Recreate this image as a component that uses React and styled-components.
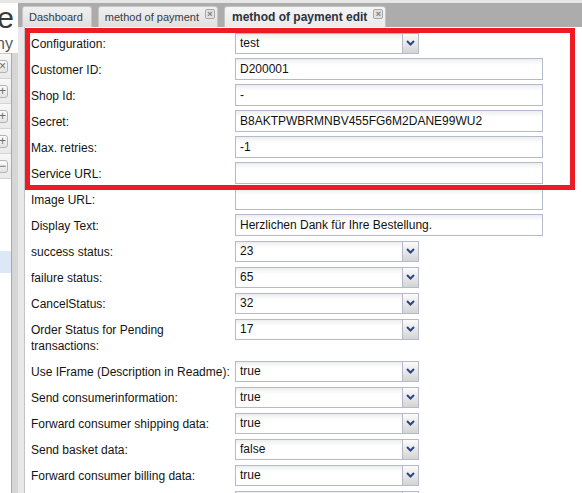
import React from "react";
import styled, { createGlobalStyle } from "styled-components";

const GlobalStyle = createGlobalStyle`
  html, body {
    margin: 0;
    padding: 0;
    background: #ffffff;
    overflow: hidden;
  }
  body {
    font-family: "Liberation Sans", Arial, sans-serif;
    font-size: 12px;
    color: #1c1c1c;
  }
`;

const rows = [
  { label: "Configuration:", kind: "select", value: "test" },
  { label: "Customer ID:", kind: "text", value: "D200001" },
  { label: "Shop Id:", kind: "text", value: "-" },
  { label: "Secret:", kind: "text", value: "B8AKTPWBRMNBV455FG6M2DANE99WU2" },
  { label: "Max. retries:", kind: "text", value: "-1" },
  { label: "Service URL:", kind: "text", value: "" },
  { label: "Image URL:", kind: "text", value: "" },
  { label: "Display Text:", kind: "text", value: "Herzlichen Dank für Ihre Bestellung." },
  { label: "success status:", kind: "select", value: "23" },
  { label: "failure status:", kind: "select", value: "65" },
  { label: "CancelStatus:", kind: "select", value: "32" },
  { label: ["Order Status for Pending", "transactions:"], kind: "select", value: "17" },
  { label: "Use IFrame (Description in Readme):", kind: "select", value: "true" },
  { label: "Send consumerinformation:", kind: "select", value: "true" },
  { label: "Forward consumer shipping data:", kind: "select", value: "true" },
  { label: "Send basket data:", kind: "select", value: "false" },
  { label: "Forward consumer billing data:", kind: "select", value: "true" },
  { label: "", kind: "select", value: "" },
];

const sideButtons = ["×", "+", "+", "+", "−"];

export default function App() {
  return (
    <>
      <GlobalStyle />
      <Shell>
        <LeftColumn>
          <LogoBox>
            <LogoTail>
              <LogoWord>e</LogoWord>
              <LogoSub>ny</LogoSub>
            </LogoTail>
          </LogoBox>
          <SideArea>
            <SidePanel>
              <SideTools>
                {sideButtons.map((b, i) => (
                  <SideRow key={i}>
                    <MiniButton>{b}</MiniButton>
                  </SideRow>
                ))}
              </SideTools>
              <SideList>
                <SideItem />
                <SideItem $selected />
              </SideList>
            </SidePanel>
            <Splitter />
          </SideArea>
        </LeftColumn>

        <Main>
          <TabBar>
            <Tab>Dashboard</Tab>
            <Tab $closable>
              method of payment
              <CloseBox>×</CloseBox>
            </Tab>
            <Tab $active $closable>
              method of payment edit
              <CloseBox>×</CloseBox>
            </Tab>
          </TabBar>
          <Content>
            <Form>
              {rows.map((r, i) => (
                <Row key={i}>
                  <Label>
                    {Array.isArray(r.label)
                      ? r.label.map((l, j) => <div key={j}>{l}</div>)
                      : r.label}
                  </Label>
                  {r.kind === "select" ? (
                    <Select>
                      <SelectValue>{r.value}</SelectValue>
                      <SelectButton>
                        <svg width="9" height="6" viewBox="0 0 9 6">
                          <path d="M1 1 L4.5 4.5 L8 1" fill="none" stroke="#2c4785" strokeWidth="2" />
                        </svg>
                      </SelectButton>
                    </Select>
                  ) : (
                    <TextField>{r.value}</TextField>
                  )}
                </Row>
              ))}
              <Highlight />
            </Form>
          </Content>
        </Main>
      </Shell>
    </>
  );
}

const Shell = styled.div`
  display: flex;
  width: 582px;
  height: 493px;
  overflow: hidden;
  background: #ffffff;
`;

const LeftColumn = styled.div`
  width: 18px;
  flex: none;
  display: flex;
  flex-direction: column;
  background: #ffffff;
  border-top: 3px solid #e6e6e6;
`;

const LogoBox = styled.div`
  height: 50px;
  overflow: hidden;
`;

const LogoTail = styled.div`
  width: 120px;
  margin-left: -106px;
  text-align: right;
`;

const LogoWord = styled.div`
  font-size: 30px;
  line-height: 28px;
  color: #3a3a3a;
  padding-top: 1px;
`;

const LogoSub = styled.div`
  font-size: 16px;
  line-height: 18px;
  color: #555555;
  margin-top: 3px;
  margin-right: 1px;
`;

const SideArea = styled.div`
  flex: 1;
  display: flex;
`;

const SidePanel = styled.div`
  width: 11px;
  display: flex;
  flex-direction: column;
  background: #f0f0f0;
  border-right: 1px solid #a9a9a9;
  overflow: hidden;
`;

const SideTools = styled.div`
  display: flex;
  flex-direction: column;
  border-top: 1px solid #c9c9c9;
`;

const SideRow = styled.div`
  height: 24px;
  display: flex;
  align-items: center;
  justify-content: flex-end;
  padding-right: 3px;
  border-bottom: 1px solid #d4d4d4;
  background: linear-gradient(#f7f7f7, #e9e9e9);
`;

const MiniButton = styled.div`
  flex: none;
  width: 14px;
  height: 11px;
  border: 1px solid #b4b4b4;
  border-radius: 3px;
  background: linear-gradient(#fbfbfb, #e2e2e2);
  color: #6a6a6a;
  font-size: 12px;
  line-height: 11px;
  text-align: right;
  padding-right: 1px;
  box-sizing: content-box;
`;

const SideList = styled.div`
  flex: 1;
  background: #ffffff;
  padding-top: 50px;
`;

const SideItem = styled.div`
  height: 22px;
  background: ${(p) => (p.$selected ? "#dde8f6" : "transparent")};
`;

const Splitter = styled.div`
  width: 6px;
  background: #d6d6d6;
`;

const Main = styled.div`
  flex: 1;
  display: flex;
  flex-direction: column;
  min-width: 0;
  border-top: 3px solid #e6e6e6;
`;

const TabBar = styled.div`
  height: 24px;
  flex: none;
  display: flex;
  align-items: flex-end;
  gap: 6px;
  padding-left: 4px;
  background: #acacac;
`;

const Tab = styled.div`
  height: 20px;
  display: flex;
  align-items: center;
  padding-left: ${(p) => (p.$active ? "7px" : "6px")};
  padding-right: ${(p) => (p.$closable ? "2px" : "8px")};
  border: 1px solid ${(p) => (p.$active ? "#c2c2c2" : "#c6c6c6")};
  border-bottom: none;
  border-radius: 3px 3px 0 0;
  background: ${(p) =>
    p.$active
      ? "linear-gradient(#f5f5f5, #eaeaea)"
      : "linear-gradient(#f0f0f0, #e0e0e0)"};
  font-size: ${(p) => (p.$active ? "12px" : "11px")};
  font-weight: ${(p) => (p.$active ? "bold" : "normal")};
  color: ${(p) => (p.$active ? "#2a3242" : "#333a48")};
  white-space: nowrap;
`;

const CloseBox = styled.span`
  width: 8px;
  height: 8px;
  margin-left: 6px;
  margin-top: -6px;
  border: 1px solid #a8a8a8;
  border-radius: 2px;
  background: #e2e2e2;
  color: #7a7a7a;
  font-size: 9px;
  line-height: 8px;
  text-align: center;
  font-weight: bold;
`;

const Content = styled.div`
  flex: 1;
  display: flex;
  background: #e8e8e8;
  padding-left: 6px;
`;

const Form = styled.div`
  position: relative;
  flex: 1;
  background: #ffffff;
  border-left: 1px solid #c4c4c4;
  padding: 4px 0 0 5px;
`;

const Highlight = styled.div`
  position: absolute;
  left: 0;
  top: 1px;
  width: 540px;
  height: 152px;
  border: 5px solid #ed1c24;
  pointer-events: none;
`;

const Row = styled.div`
  display: flex;
  align-items: flex-start;
  min-height: 26px;
`;

const Label = styled.div`
  width: 205px;
  flex: none;
  padding: 5px 0 5px 1px;
  box-sizing: border-box;
  line-height: 16px;
  font-size: 12px;
  color: #141414;
  white-space: nowrap;
`;

const TextField = styled.div`
  width: 308px;
  height: 22px;
  margin-top: 1px;
  box-sizing: border-box;
  border: 1px solid #b6b9cc;
  background: linear-gradient(#eceeee, #ffffff 6px);
  padding: 0 4px;
  font-size: 12px;
  line-height: 20px;
  color: #111111;
  white-space: nowrap;
  overflow: hidden;
`;

const Select = styled.div`
  width: 184px;
  height: 21px;
  margin-top: 2px;
  box-sizing: border-box;
  display: flex;
  border: 1px solid #b6b9cc;
  background: linear-gradient(#eceeee, #ffffff 6px);
`;

const SelectValue = styled.div`
  flex: 1;
  padding: 0 4px;
  font-size: 12px;
  line-height: 19px;
  color: #111111;
`;

const SelectButton = styled.div`
  width: 16px;
  flex: none;
  display: flex;
  align-items: center;
  justify-content: center;
  border-left: 1px solid #b6b9cc;
  background: linear-gradient(#fbfbfb, #d4d4d4);
  padding-bottom: 2px;
  box-sizing: border-box;
`;
